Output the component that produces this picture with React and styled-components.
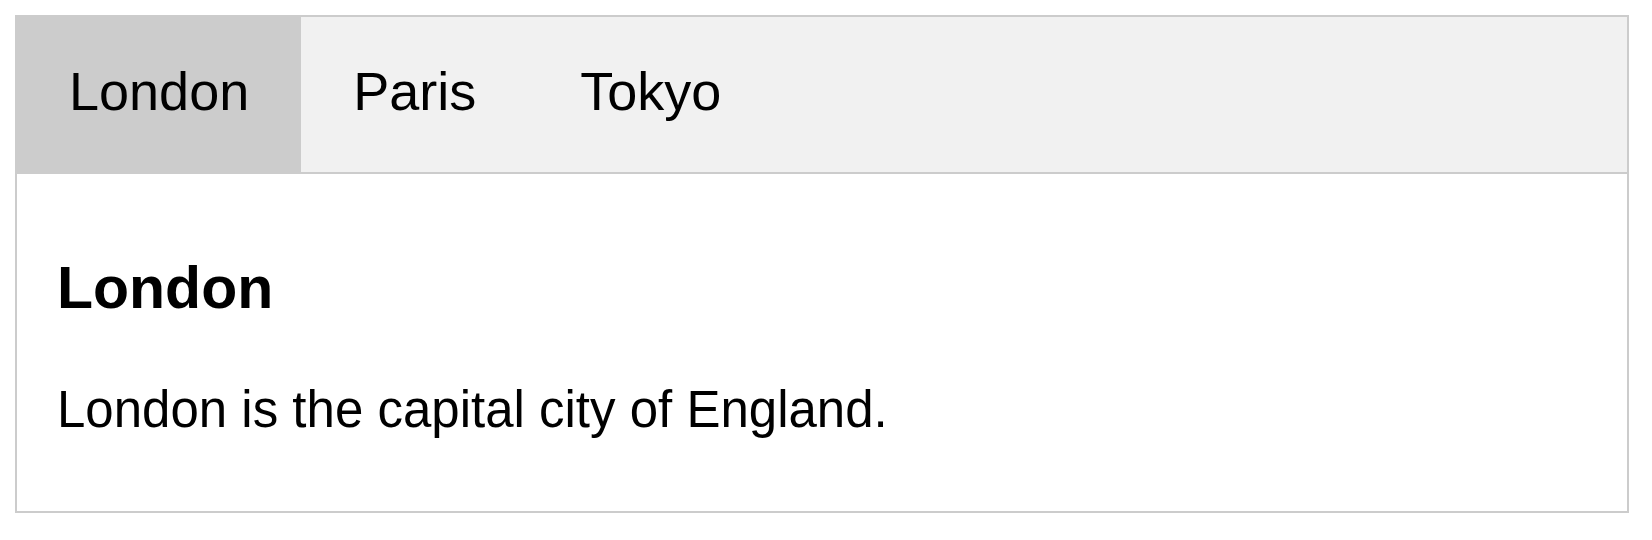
import styled, { createGlobalStyle } from 'styled-components';

const cities = ['London', 'Paris', 'Tokyo'];

export default function App() {
  return (
    <>
      <GlobalStyle />
      <Page>
        <TabBar>
          {cities.map((city) => (
            <TabButton key={city} $active={city === 'London'}>
              {city}
            </TabButton>
          ))}
        </TabBar>
        <TabContent>
          <Heading>London</Heading>
          <Text>London is the capital city of England.</Text>
        </TabContent>
      </Page>
    </>
  );
}

const GlobalStyle = createGlobalStyle`
  body {
    margin: 0;
    background: #fff;
    font-family: "Liberation Sans", Arial, sans-serif;
    color: #000;
  }
`;

const Page = styled.div`
  padding: 15px 23px 0 15px;
`;

const TabBar = styled.div`
  display: flex;
  border: 2px solid #ccc;
  background: #f1f1f1;
`;

const TabButton = styled.button`
  border: none;
  outline: none;
  margin: 0;
  padding: 42px 52px 49px;
  font-family: inherit;
  font-size: 54px;
  line-height: 64px;
  color: #000;
  cursor: pointer;
  background: ${(p) => (p.$active ? '#ccc' : 'transparent')};
`;

const TabContent = styled.div`
  border: 2px solid #ccc;
  border-top: none;
  padding: 78px 40px 71px;
`;

const Heading = styled.h3`
  margin: 0 0 56px;
  font-size: 59px;
  line-height: 72px;
  font-weight: bold;
`;

const Text = styled.p`
  margin: 0;
  font-size: 51px;
  line-height: 60px;
`;
